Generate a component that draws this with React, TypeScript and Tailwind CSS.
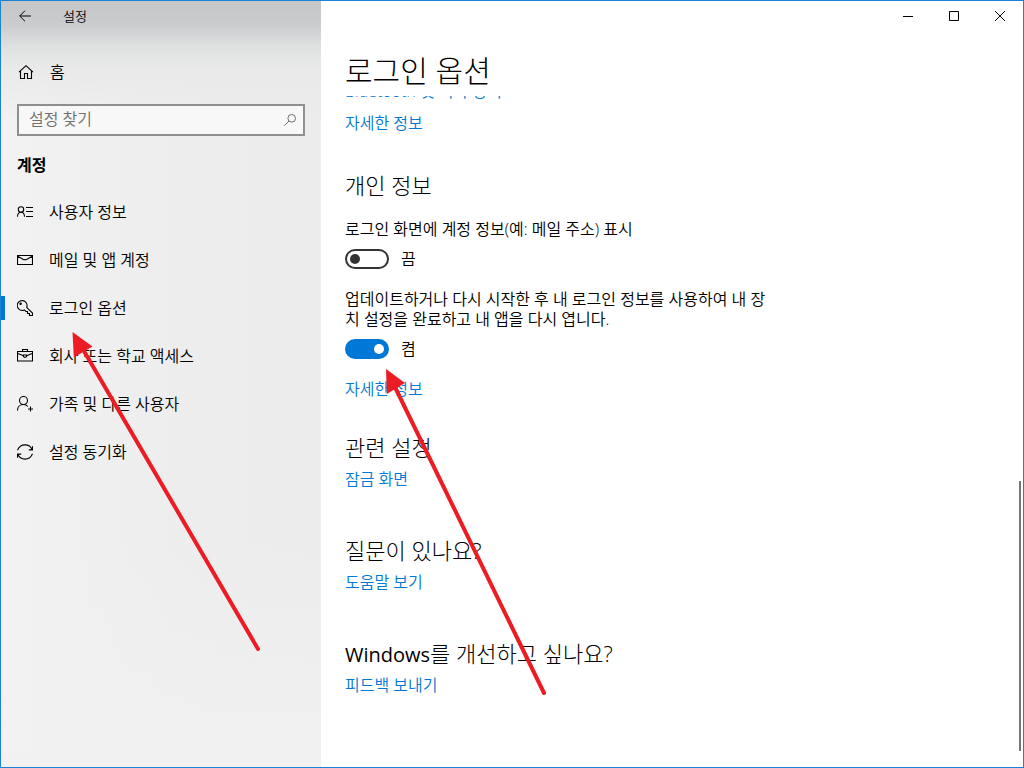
import { useState } from "react";
import type { ReactNode } from "react";

function Glyph({ children }: { children: ReactNode }) {
  return (
    <svg
      className="h-4 w-4 shrink-0"
      viewBox="0 0 16 16"
      fill="none"
      stroke="currentColor"
      strokeWidth="1.1"
      aria-hidden="true"
    >
      {children}
    </svg>
  );
}

const navItems: { label: string; icon: ReactNode }[] = [
  {
    label: "사용자 정보",
    icon: (
      <>
        <circle cx="4" cy="5.500" r="2.700" />
        <path d="M.5 12.800C.5 10 2 8.200 4 8.200s3.500 1.800 3.500 4.600M9 3.500h7M9 7.500h7M9 12.500h7" />
      </>
    ),
  },
  {
    label: "메일 및 앱 계정",
    icon: <path d="M.5 3.500h15v9H.5zM.8 4.300l5.200 2.900q2 1 4 0l5.200-2.900" />,
  },
  {
    label: "로그인 옵션",
    icon: (
      <>
        <path d="M9.700 7.300l5.800 5.700v2.500h-3v-2h-2v-2H9L7.300 9.900A4.900 4.900 0 1 1 9.700 7.300z" />
        <circle cx="3.600" cy="3.700" r=".7" />
      </>
    ),
  },
  {
    label: "회사 또는 학교 액세스",
    icon: (
      <>
        <path d="M.5 3.500h15v9.500H.5zM5.500 3.500v-2h5v2M.8 5.500l5.700 2.300M15.200 5.500L9.500 7.800" />
        <path d="M6.500 7h3v1.700l-1.500.8-1.500-.8z" />
      </>
    ),
  },
  {
    label: "가족 및 다른 사용자",
    icon: (
      <>
        <circle cx="6.500" cy="4.500" r="4" />
        <path d="M.5 14.500c0-3.500 2.500-6 6-6 2 0 3.400.8 4.400 2M13.500 10.500v5M11 13h5" />
      </>
    ),
  },
  {
    label: "설정 동기화",
    icon: (
      <path d="M.5 6.200C1.700 3 4.600.9 8 .9c3.300 0 6 1.900 7.200 4.800M15.500 2.200v3.700h-3.700M15.500 9.800c-1.200 3.200-4.100 5.300-7.500 5.300-3.300 0-6-1.900-7.200-4.800M.5 13.800V10.100h3.700" />
    ),
  },
];

function Toggle({ id, initial }: { id: string; initial: boolean }) {
  const [on, setOn] = useState(initial);
  return (
    <div className="mt-2.5 flex h-5 items-center gap-3">
      <button
        type="button"
        role="switch"
        aria-checked={on}
        aria-labelledby={id}
        onClick={() => setOn(!on)}
        className={
          on
            ? "flex h-5 w-11 items-center justify-end rounded-full border-2 border-[#0078d7] bg-[#0078d7] px-[3px]"
            : "flex h-5 w-11 items-center justify-start rounded-full border-2 border-[#333333] bg-white px-[3px]"
        }
      >
        <span
          className={on ? "h-2.5 w-2.5 rounded-full bg-white" : "h-2.5 w-2.5 rounded-full bg-[#333333]"}
        />
      </button>
      <span>{on ? "켬" : "끔"}</span>
    </div>
  );
}

function TextLink({ children }: { children: ReactNode }) {
  return (
    <a href="#" className="block w-fit text-[#0078d7]">
      {children}
    </a>
  );
}

function Related({ title, link }: { title: ReactNode; link: string }) {
  return (
    <section>
      <h2 className="mb-2 flex h-7 items-baseline text-[22px] leading-7 font-light">{title}</h2>
      <TextLink>{link}</TextLink>
    </section>
  );
}

export default function App() {
  return (
    <div className="relative flex min-h-screen border border-[#1c82d4] bg-white font-['Open_Sans','Noto_Sans_CJK_KR',sans-serif] text-base leading-5 font-[350] text-black">
      <aside className="flex w-80 shrink-0 flex-col bg-[linear-gradient(to_bottom,#c5c6c8_0,#cbccce_24px,#dfe0e0_46px,#e9e9e9_66px,#eeeeee00_120px),linear-gradient(to_bottom,#f1f1f100_70%,#f1f1f1_100%),linear-gradient(to_right,#f2f2f2,#ededed_60%,#ececec)]">
        <div className="flex h-[30px] items-center">
          <button type="button" aria-label="뒤로" className="flex h-full w-12 items-center justify-center">
            <svg className="h-3 w-3" viewBox="0 0 12 12" fill="none" stroke="currentColor" aria-hidden="true">
              <path d="M12 6H.8M6 .7L.7 6 6 11.300" />
            </svg>
          </button>
          <span className="ml-3.5 text-[13px]">설정</span>
        </div>

        <a href="#" className="mt-[21px] flex h-10 items-center gap-4 px-[17px]">
          <Glyph>
            <path d="M1 8.200L8 1.700 15 8.200M2.500 7v7.500h4v-5h3v5h4V7" />
          </Glyph>
          홈
        </a>

        <form
          className="mx-4 mt-3 flex h-8 items-center border-2 border-[#8f8f8f] bg-[#f8f8f8]"
          onSubmit={(e) => e.preventDefault()}
        >
          <input
            type="text"
            aria-label="설정 찾기"
            placeholder="설정 찾기"
            className="h-full min-w-0 flex-1 bg-transparent pb-0.5 pl-2.5 outline-none placeholder:text-[#6f6f6f]"
          />
          <button type="submit" aria-label="찾기" className="flex h-full w-[26px] items-center justify-center text-[#6f6f6f]">
            <svg className="h-3 w-3" viewBox="0 0 12 12" fill="none" stroke="currentColor" aria-hidden="true">
              <circle cx="7.700" cy="4.300" r="3.800" />
              <path d="M5 7L.3 11.700" />
            </svg>
          </button>
        </form>

        <h2 className="mt-[19px] px-4 font-bold">계정</h2>

        <nav className="mt-[13px]">
          {navItems.map((item) => {
            const selected = item.label === "로그인 옵션";
            return (
              <a
                key={item.label}
                href="#"
                aria-current={selected ? "page" : undefined}
                className="flex h-12 items-center"
              >
                <span className={selected ? "mr-3 h-6 w-1 bg-[#0078d7]" : "mr-3 h-6 w-1"} />
                <Glyph>{item.icon}</Glyph>
                <span className="ml-4">{item.label}</span>
              </a>
            );
          })}
        </nav>
      </aside>

      <main className="flex min-w-0 flex-1 flex-col">
        <div className="flex h-[30px] justify-end">
          <button type="button" aria-label="최소화" className="flex w-[46px] items-center justify-center">
            <svg className="h-2.5 w-2.5" viewBox="0 0 10 10" stroke="currentColor" aria-hidden="true">
              <path d="M0 5.500h10" />
            </svg>
          </button>
          <button type="button" aria-label="최대화" className="flex w-[46px] items-center justify-center">
            <svg className="h-2.5 w-2.5" viewBox="0 0 10 10" fill="none" stroke="currentColor" aria-hidden="true">
              <path d="M.5.5h9v9h-9z" />
            </svg>
          </button>
          <button type="button" aria-label="닫기" className="flex w-[46px] items-center justify-center">
            <svg className="h-2.5 w-2.5" viewBox="0 0 10 10" stroke="currentColor" aria-hidden="true">
              <path d="M0 0l10 10M10 0L0 10" />
            </svg>
          </button>
        </div>

        <div className="px-6">
          <h1 className="mt-5 mb-[5px] text-[30px] leading-10 font-light">로그인 옵션</h1>

          <div className="flex h-[5px] items-end overflow-hidden">
            <TextLink>Bluetooth 및 기타 장치</TextLink>
          </div>
          <div className="mt-3">
            <TextLink>자세한 정보</TextLink>
          </div>

          <section className="mt-[38px] max-w-[440px]">
            <h2 className="text-[22px] leading-7 font-light">개인 정보</h2>
            <p id="show-account" className="mt-5">
              로그인 화면에 계정 정보(예: 메일 주소) 표시
            </p>
            <Toggle id="show-account" initial={false} />
            <p id="use-signin" className="mt-5 max-w-[428px]">
              업데이트하거나 다시 시작한 후 내 로그인 정보를 사용하여 내 장치 설정을 완료하고 내 앱을 다시 엽니다.
            </p>
            <Toggle id="use-signin" initial={true} />
            <div className="mt-5">
              <TextLink>자세한 정보</TextLink>
            </div>
          </section>

          <div className="mt-[34px] flex flex-col gap-[47px]">
            <Related title="관련 설정" link="잠금 화면" />
            <Related title="질문이 있나요?" link="도움말 보기" />
            <Related
              title={
                <>
                  <span className="text-xl leading-7 font-normal">Windows</span>
                  <span>를 개선하고 싶나요?</span>
                </>
              }
              link="피드백 보내기"
            />
          </div>
        </div>
      </main>

      <div className="absolute right-[2px] bottom-4 h-[270px] w-0.5 bg-[#767676]" />

      <svg
        className="pointer-events-none absolute top-[330px] left-[70px] h-[324px] w-[192px]"
        viewBox="71 331 192 324"
        aria-hidden="true"
      >
        <path d="M81 346L258 649" stroke="#ed1c24" strokeWidth="4" strokeLinecap="round" />
        <path d="M72.500 332l1.300 25.500L92.500 346.500z" fill="#ed1c24" />
      </svg>
      <svg
        className="pointer-events-none absolute top-[366px] left-[383px] h-[332px] w-[166px]"
        viewBox="384 367 166 332"
        aria-hidden="true"
      >
        <path d="M393 383L544 693" stroke="#ed1c24" strokeWidth="4" strokeLinecap="round" />
        <path d="M386 369l.8 25L405 383z" fill="#ed1c24" />
      </svg>
    </div>
  );
}
